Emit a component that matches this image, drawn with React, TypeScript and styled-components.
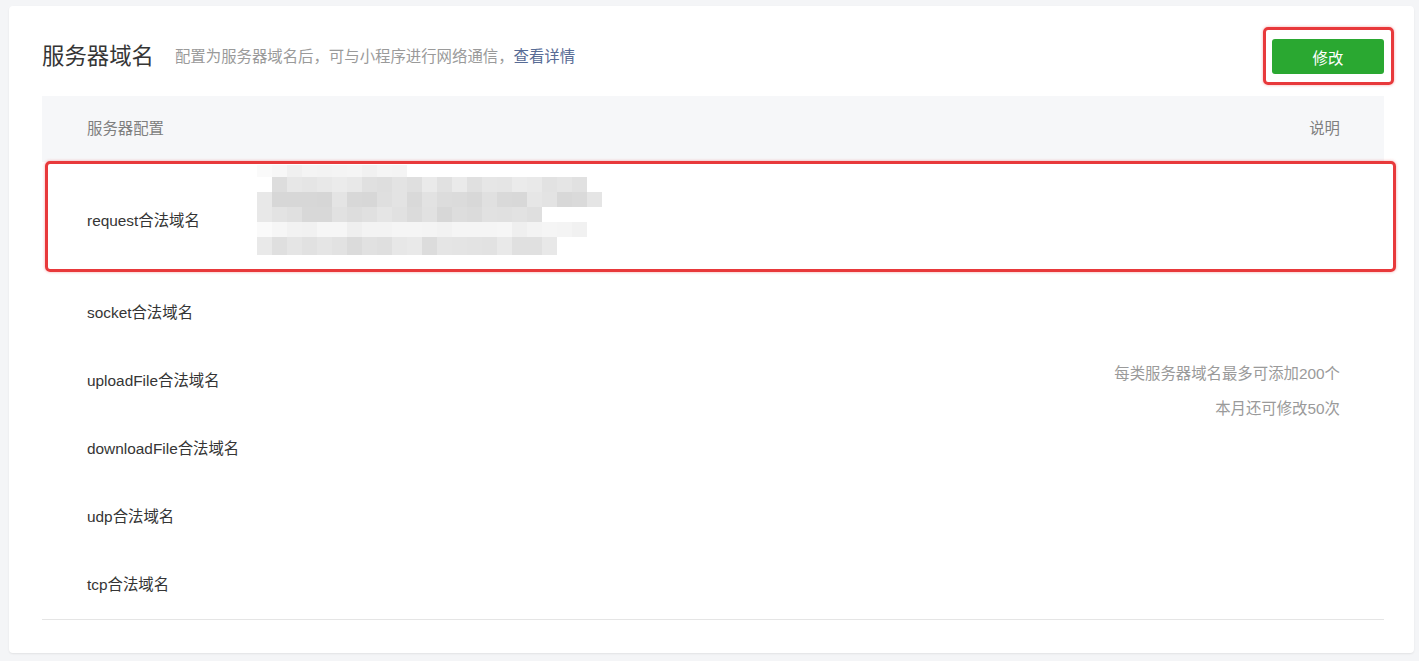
import React from "react";
import styled, { createGlobalStyle } from "styled-components";

const GlobalStyle = createGlobalStyle`
	html, body {
		margin: 0;
		padding: 0;
		background: #f4f5f7;
	}

	body {
		font-family: "Liberation Sans", "Noto Sans CJK SC", sans-serif;
		font-size: 15.4px;
		color: #353535;
	}
`;

const Page = styled.div`
	padding: 6px 5px 9px 9px;
`;

const Card = styled.section`
	background: #fff;
	border-radius: 4px;
	box-shadow: 0 1px 2px rgba(0, 0, 0, .08);
	padding: 0 30px 33px 33px;
`;

const Header = styled.header`
	display: flex;
	align-items: center;
	padding: 33px 0 22px;
`;

const Title = styled.h2`
	margin: 0;
	font-size: 22.4px;
	font-weight: normal;
	line-height: 30px;
	color: #353535;
`;

const Desc = styled.p`
	margin: 0 0 0 21px;
	font-size: 15.4px;
	line-height: 20px;
	color: #9a9a9a;
	flex: 1;
`;

const DescLink = styled.a`
	color: #576b95;
	text-decoration: none;
`;

const Marked = styled.span`
	position: relative;
	display: inline-flex;

	&:after {
		content: "";
		position: absolute;
		left: -9px;
		top: -12px;
		right: -10px;
		bottom: -11px;
		border: 3px solid #e8393b;
		border-radius: 5px;
		box-shadow: 0 0 3px rgba(232, 57, 59, .45);
		pointer-events: none;
	}
`;

const Button = styled.button`
	width: 112px;
	height: 35px;
	border: 0;
	border-radius: 3px;
	background: #2aa831;
	color: #fff;
	font-family: inherit;
	font-size: 15.4px;
	cursor: pointer;
`;

const TableHead = styled.div`
	display: flex;
	justify-content: space-between;
	align-items: center;
	height: 66px;
	padding: 0 44px 0 45px;
	background: #f6f7f9;
	color: #7f7f7f;
	line-height: 20px;
`;

const TableBody = styled.div`
	display: grid;
	grid-template-columns: 1fr auto;
	border-bottom: 1px solid #e5e5e5;
`;

const RowList = styled.div`
	display: flex;
	flex-direction: column;
`;

const Row = styled.div<{ $height: number; $marked?: boolean }>`
	position: relative;
	display: flex;
	align-items: center;
	height: ${(p) => p.$height}px;
	padding-left: 45px;

	${(p) =>
		p.$marked &&
		`
		&:after {
			content: "";
			position: absolute;
			left: 3px;
			top: -1px;
			width: 1351px;
			height: 111px;
			box-sizing: border-box;
			border: 3px solid #e8393b;
			border-radius: 5px;
			box-shadow: 0 0 3px rgba(232, 57, 59, .45);
			pointer-events: none;
		}
	`}
`;

const Label = styled.div`
	width: 170px;
	flex-shrink: 0;
	line-height: 20px;
	color: #353535;
`;

const Notes = styled.div`
	display: flex;
	flex-direction: column;
	justify-content: center;
	align-items: flex-end;
	padding-right: 44px;
	color: #9a9a9a;
	line-height: 35px;
`;

/* pixelated domain list */
const Mosaic = styled.div`
	align-self: flex-start;
	margin-top: 3px;
	display: flex;
	flex-direction: column;
`;

const MosaicRow = styled.div<{ $h: number; $offset: number }>`
	display: flex;
	height: ${(p) => p.$h}px;
	padding-left: ${(p) => p.$offset}px;
`;

const Cell = styled.div`
	width: 15px;
	height: 100%;
`;

type Band = { h: number; offset: number; count: number; base: number; spread: number };

const bands: Band[] = [
	{ h: 12, offset: 0, count: 10, base: 244, spread: 8 },
	{ h: 15, offset: 15, count: 21, base: 228, spread: 14 },
	{ h: 15, offset: 0, count: 23, base: 222, spread: 16 },
	{ h: 15, offset: 0, count: 19, base: 222, spread: 14 },
	{ h: 15, offset: 0, count: 22, base: 242, spread: 8 },
	{ h: 18, offset: 0, count: 20, base: 226, spread: 14 },
];

const shade = (row: number, col: number, b: Band) => {
	const n = Math.abs(Math.sin(row * 91.7 + col * 12.9898) * 43758.5453) % 1;
	let v = Math.round(b.base + (n - 0.5) * b.spread);
	if (col === 0 && b.offset === 0) v = Math.min(250, v + 12);
	return `rgb(${v}, ${v}, ${v})`;
};

const DomainMosaic = () => (
	<Mosaic>
		{bands.map((b, r) => (
			<MosaicRow key={r} $h={b.h} $offset={b.offset}>
				{Array.from({ length: b.count }).map((_, c) => (
					<Cell key={c} style={{ background: shade(r, c, b) }} />
				))}
			</MosaicRow>
		))}
	</Mosaic>
);

const domainRows = [
	"socket合法域名",
	"uploadFile合法域名",
	"downloadFile合法域名",
	"udp合法域名",
	"tcp合法域名",
];

const App = () => {
	return (
		<Page>
			<GlobalStyle />
			<Card>
				<Header>
					<Title>服务器域名</Title>
					<Desc>
						配置为服务器域名后，可与小程序进行网络通信，
						<DescLink href="#">查看详情</DescLink>
					</Desc>
					<Marked>
						<Button>修改</Button>
					</Marked>
				</Header>

				<TableHead>
					<span>服务器配置</span>
					<span>说明</span>
				</TableHead>

				<TableBody>
					<RowList>
						<Row $height={117} $marked>
							<Label>request合法域名</Label>
							<DomainMosaic />
						</Row>
						{domainRows.map((name) => (
							<Row key={name} $height={68}>
								<Label>{name}</Label>
							</Row>
						))}
					</RowList>
					<Notes>
						<span>每类服务器域名最多可添加200个</span>
						<span>本月还可修改50次</span>
					</Notes>
				</TableBody>
			</Card>
		</Page>
	);
};

export default App;
